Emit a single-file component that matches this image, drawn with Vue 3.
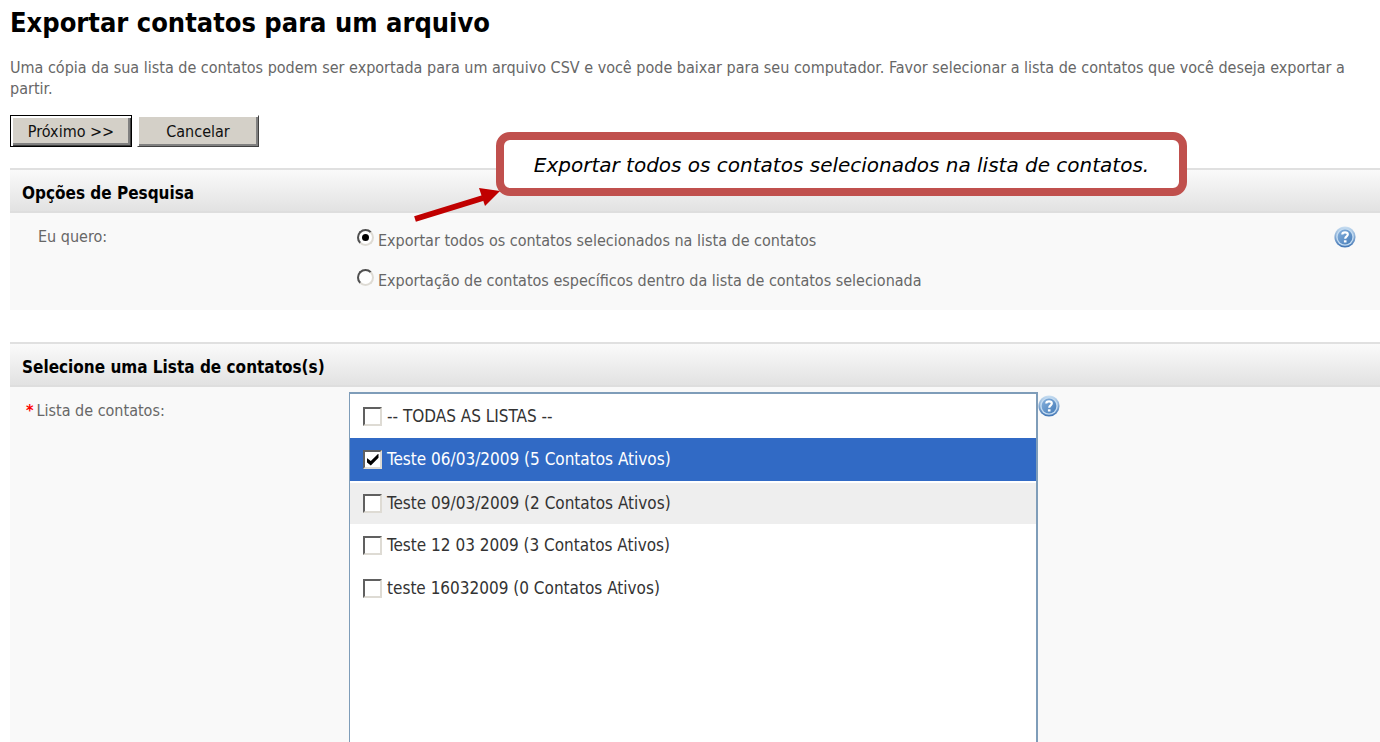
<script setup>
import { ref } from 'vue'

const scope = ref('all')
const scopes = [
  { value: 'all', label: 'Exportar todos os contatos selecionados na lista de contatos' },
  { value: 'some', label: 'Exportação de contatos específicos dentro da lista de contatos selecionada' },
]
const lists = ref([
  { id: 'all', label: '-- TODAS AS LISTAS --', checked: false },
  { id: 'l1', label: 'Teste 06/03/2009 (5 Contatos Ativos)', checked: true },
  { id: 'l2', label: 'Teste 09/03/2009 (2 Contatos Ativos)', checked: false, hover: true },
  { id: 'l3', label: 'Teste 12 03 2009 (3 Contatos Ativos)', checked: false },
  { id: 'l4', label: 'teste 16032009 (0 Contatos Ativos)', checked: false },
])
</script>

<template>
  <main class="page">
    <svg class="defs" aria-hidden="true">
      <defs>
        <linearGradient id="help-rim" x1="0" y1="0" x2="0" y2="1">
          <stop offset="0" stop-color="#c9dff2" />
          <stop offset="1" stop-color="#3f74b4" />
        </linearGradient>
        <linearGradient id="help-core" x1="0" y1="0" x2="1" y2="1">
          <stop offset="0" stop-color="#86b0dc" />
          <stop offset="1" stop-color="#477db9" />
        </linearGradient>
        <symbol id="help-icon" viewBox="0 0 22 22">
          <circle cx="11" cy="11" r="10.6" fill="url(#help-rim)" />
          <circle cx="11" cy="11" r="8.8" fill="#c3dbf1" />
          <circle cx="11" cy="11" r="7.4" fill="url(#help-core)" />
          <path d="M8.3 8.6C8.3 5.7 13.8 5.7 13.8 8.6C13.8 10.4 11.2 10.4 11.2 12.8" fill="none" stroke="#fff" stroke-width="2.2" />
          <rect x="9.9" y="14.3" width="2.6" height="2.2" fill="#fff" />
        </symbol>
      </defs>
    </svg>

    <h1>Exportar contatos para um arquivo</h1>
    <p class="intro">
      Uma cópia da sua lista de contatos podem ser exportada para um arquivo CSV e você pode baixar para seu computador. Favor selecionar a lista de contatos que você deseja exportar a partir.
    </p>
    <div class="actions">
      <button type="button" class="btn primary">Próximo &gt;&gt;</button>
      <button type="button" class="btn">Cancelar</button>
    </div>

    <section class="panel">
      <h2>Opções de Pesquisa</h2>
      <div class="body">
        <span id="scope-label" class="label">Eu quero:</span>
        <div class="radios" role="radiogroup" aria-labelledby="scope-label">
          <label v-for="s in scopes" :key="s.value">
            <input v-model="scope" type="radio" name="scope" :value="s.value" />
            <span>{{ s.label }}</span>
          </label>
        </div>
        <button type="button" class="help" aria-label="Ajuda"><svg><use href="#help-icon" /></svg></button>
      </div>
      <div class="callout">Exportar todos os contatos selecionados na lista de contatos.</div>
      <svg class="arrow" viewBox="0 0 88 36" aria-hidden="true">
        <path d="M2 32L70 11" stroke="#c00000" stroke-width="6" />
        <path d="M87 4L66 1L72 19Z" fill="#c00000" />
      </svg>
    </section>

    <section class="panel grow">
      <h2>Selecione uma Lista de contatos(s)</h2>
      <div class="body lists-body">
        <span id="lists-label" class="label required"><b>*</b>Lista de contatos:</span>
        <div class="lists" role="group" aria-labelledby="lists-label">
          <label v-for="l in lists" :key="l.id" :class="{ selected: l.checked, hover: l.hover }">
            <input v-model="l.checked" type="checkbox" />
            <span>{{ l.label }}</span>
          </label>
        </div>
        <button type="button" class="help" aria-label="Ajuda"><svg><use href="#help-icon" /></svg></button>
      </div>
    </section>
  </main>
</template>

<style>
body {
  margin: 0;
  background: #fff;
}
</style>

<style scoped>
.page {
  box-sizing: border-box;
  min-height: 100vh;
  display: flex;
  flex-direction: column;
  padding: 4px 0 0 10px;
  font-family: "DejaVu Sans Condensed", Tahoma, sans-serif;
  font-size: 16px;
  line-height: 21px;
  color: #676767;
}
.defs {
  position: absolute;
  width: 0;
  height: 0;
}
h1 {
  margin: 0;
  font-size: 27px;
  line-height: 38px;
  color: #000;
}
.intro {
  margin: 15px 8px 0 0;
}
.actions {
  display: flex;
  gap: 5px;
  margin: 16px 0 21px;
}
.btn {
  width: 122px;
  height: 32px;
  padding: 0;
  font: inherit;
  color: #111;
  background: #d4d0c8;
  border: 1px solid;
  border-color: #fff #404040 #404040 #fff;
  box-shadow: inset 1px 1px 0 #fff, inset -2px -2px 0 #808080;
}
.btn.primary {
  border-color: #000;
  box-shadow: inset 2px 2px 0 #fff, inset -1px -1px 0 #404040, inset -3px -3px 0 #808080;
}
.panel {
  position: relative;
  margin-bottom: 32px;
}
h2 {
  box-sizing: border-box;
  margin: 0;
  height: 45px;
  padding: 2px 0 0 12px;
  border-top: 2px solid #e0e0e0;
  border-bottom: 2px solid #dedede;
  background: linear-gradient(#fafafa, #e2e2e2);
  font-size: 17px;
  line-height: 43px;
  color: #000;
}
.body {
  display: flex;
  align-items: flex-start;
  background: #f9f9f9;
}
.label {
  box-sizing: border-box;
  flex: 0 0 339px;
  padding: 13px 0 0 28px;
}
.required {
  padding-left: 16px;
}
.required b {
  margin-right: 3px;
  color: #f00;
}
.radios {
  flex: 1;
  display: grid;
  gap: 18px;
  padding: 16px 0 19px 8px;
}
.radios label {
  display: flex;
  align-items: flex-start;
  gap: 4px;
}
.radios label span {
  padding-top: 1px;
}
input {
  appearance: none;
  flex: none;
  display: grid;
  place-items: center;
  box-sizing: border-box;
  margin: 0;
  background: #fff;
}
input[type="radio"] {
  width: 17px;
  height: 17px;
  border: 2px solid;
  border-color: #505050 #dedbd4 #dedbd4 #505050;
  border-radius: 50%;
}
input[type="radio"]:checked::before {
  content: "";
  width: 7px;
  height: 7px;
  border-radius: 50%;
  background: #000;
}
.help {
  width: 22px;
  height: 22px;
  margin: 13px 24px 0 0;
  padding: 0;
  border: 0;
  background: none;
}
.help svg {
  display: block;
  width: 22px;
  height: 22px;
}
.callout {
  position: absolute;
  top: -36px;
  left: 486px;
  box-sizing: border-box;
  width: 691px;
  height: 64px;
  border: 8px solid #c0504d;
  border-radius: 14px;
  background: #fff;
  font: italic 20px/50px "DejaVu Sans", Verdana, sans-serif;
  text-align: center;
  color: #000;
}
.arrow {
  position: absolute;
  top: 19px;
  left: 403px;
  width: 88px;
  height: 36px;
}
.grow {
  flex: 1;
  display: flex;
  flex-direction: column;
  margin-bottom: 0;
}
.lists-body {
  flex: 1;
}
.lists {
  align-self: stretch;
  box-sizing: border-box;
  flex: 0 1 689px;
  margin-top: 5px;
  padding-top: 1px;
  border: 1px solid #7f9db9;
  border-width: 2px 2px 0 1px;
  background: #fff;
  font-size: 17px;
  color: #333;
}
.lists label {
  display: flex;
  align-items: center;
  gap: 5px;
  height: 43px;
  padding-left: 13px;
}
.lists .selected {
  background: #316ac5;
  color: #fff;
}
.lists .hover {
  box-sizing: border-box;
  border-top: 2px solid #fff;
  background: #eee;
}
input[type="checkbox"] {
  width: 19px;
  height: 19px;
  border: 2px solid;
  border-color: #606060 #dedbd4 #dedbd4 #606060;
}
input[type="checkbox"]:checked::before {
  content: "";
  width: 12px;
  height: 12px;
  background: #000;
  clip-path: polygon(0 35%, 36% 62%, 100% 0, 100% 36%, 36% 100%, 0 70%);
}
.lists-body .help {
  margin: 8px 0 0;
}
</style>
